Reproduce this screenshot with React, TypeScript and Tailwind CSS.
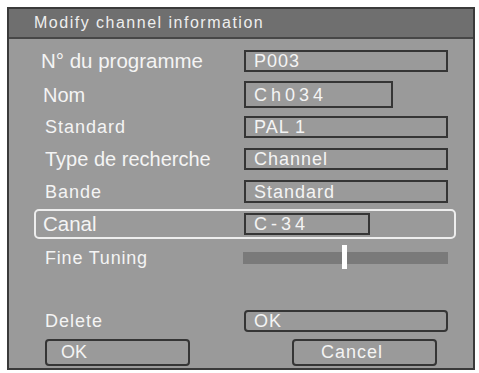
const FONT = { fontFamily: '"Liberation Sans", Arial, sans-serif' };

function ValueBox({ children, w = "w-[204px]", h = "h-[22px]", wide = false, rounded = false }: { children: React.ReactNode; w?: string; h?: string; wide?: boolean; rounded?: boolean }) {
  return (
    <div
      className={`${w} ${h} border-2 border-[#353535] flex items-center pl-[8px] text-[18px] leading-none text-[#f4f4f4] ${
        wide ? "tracking-[4px]" : "tracking-[1px]"
      } ${rounded ? "rounded-[4px]" : ""}`}
    >
      {children}
    </div>
  );
}

function Row({ label, labelClass, h, active = false, children }: { label: string; labelClass: string; h: string; active?: boolean; children?: React.ReactNode }) {
  return (
    <div className={`${h} flex items-center`}>
      <div
        className={`flex-1 flex items-center h-[30px] rounded-[5px] border-2 ${
          active ? "border-[#eeeeee]" : "border-transparent"
        }`}
      >
        <div className={`w-[208px] text-[#f4f4f4] leading-none ${labelClass}`}>{label}</div>
        {children}
      </div>
    </div>
  );
}

export default function App() {
  return (
    <div className="w-[479px] h-[373px] bg-white p-[7px]" style={FONT}>
      <div className="w-[468px] h-[363px] border-2 border-[#3a3a3a] bg-[#9a9a9a] flex flex-col">
        {/* Title bar */}
        <div className="h-[31px] bg-[#6f6f6f] border-b-2 border-[#474747] flex items-center pl-[25px] text-[16px] tracking-[1.5px] text-[#eeeeee]">
          Modify channel information
        </div>

        <div className="flex flex-col pt-[7px] pl-[25px] pr-[17px]">
          <Row label="N° du programme" labelClass="pl-[5px] text-[20.5px]" h="h-[30px]">
            <ValueBox>P003</ValueBox>
          </Row>
          <Row label="Nom" labelClass="pl-[7px] text-[20px]" h="h-[37px]">
            <ValueBox w="w-[149px]" h="h-[27px]" wide>Ch034</ValueBox>
          </Row>
          <Row label="Standard" labelClass="pl-[9px] text-[18px] tracking-[1px]" h="h-[28px]">
            <ValueBox>PAL 1</ValueBox>
          </Row>
          <Row label="Type de recherche" labelClass="pl-[9px] text-[20px]" h="h-[36px]">
            <ValueBox>Channel</ValueBox>
          </Row>
          <Row label="Bande" labelClass="pl-[9px] text-[18px] tracking-[1px]" h="h-[29px]">
            <ValueBox h="h-[23px]">Standard</ValueBox>
          </Row>
          <Row label="Canal" labelClass="pl-[7px] text-[20.5px]" h="h-[36px]" active>
            <ValueBox w="w-[126px]" wide>C-34</ValueBox>
          </Row>
          <Row label="Fine Tuning" labelClass="pl-[9px] text-[18px] tracking-[0.8px]" h="h-[31px]">
            <div className="relative w-[205px] h-[12px] bg-[#7a7a7a] -ml-[1px]">
              <div className="absolute left-[99px] -top-[7px] w-[5px] h-[24px] bg-white" />
            </div>
          </Row>

          <div className="h-[33px]" />

          <Row label="Delete" labelClass="pl-[9px] text-[18px] tracking-[1px]" h="h-[30px]">
            <ValueBox rounded>OK</ValueBox>
          </Row>

          {/* Buttons */}
          <div className="h-[32px] flex items-center">
            <div className="ml-[11px] w-[145px] h-[27px] border-2 border-[#353535] rounded-[4px] flex items-center pl-[14px] text-[18px] leading-none text-[#f4f4f4]">
              OK
            </div>
            <div className="ml-[102px] w-[145px] h-[27px] border-2 border-[#353535] rounded-[4px] flex items-center pl-[27px] text-[18px] tracking-[1px] leading-none text-[#f4f4f4]">
              Cancel
            </div>
          </div>
        </div>
      </div>
    </div>
  );
}
